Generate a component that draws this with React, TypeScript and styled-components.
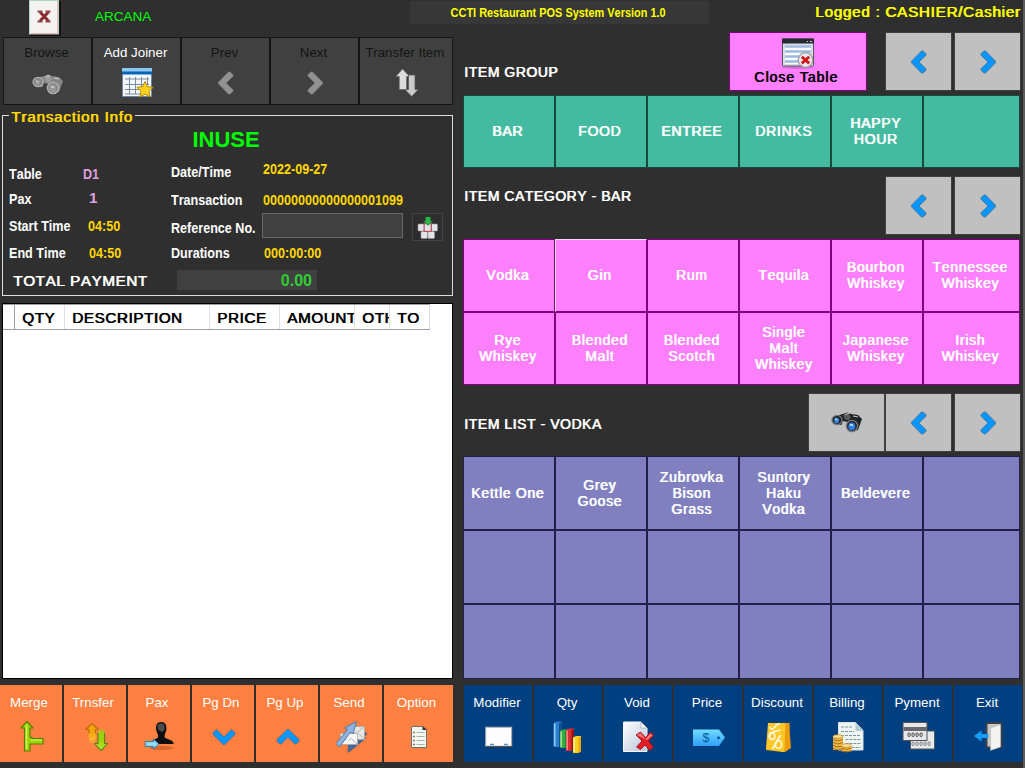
import React from "react";
import styled, { createGlobalStyle, css } from "styled-components";

const Global = createGlobalStyle`
  * { box-sizing: border-box; }
  body { margin: 0; background: #2f2f2f; font-family: "Liberation Sans", Arial, sans-serif; overflow: hidden; }
  body, button { font-kerning: none; }
  svg { display: block; flex: none; overflow: visible; }
`;

/* regular face doubled by one pixel, the way system bitmap bold is made */
const wideBold = css`
  font-weight: 400;
  letter-spacing: 0.6px;
  text-shadow: 0.8px 0 0 currentColor;
`;

const Page = styled.div`
  width: 1025px;
  height: 768px;
  background: #2f2f2f;
  border-right: 2px solid #5c5c5c;
  display: flex;
  flex-direction: column;
`;

const Header = styled.header`
  height: 32px;
  display: flex;
  align-items: flex-start;
  padding-left: 29px;
  flex: none;
`;

const Terminal = styled.div`
  width: 315px;
  margin-left: 34px;
  padding-top: 8px;
  font-size: 13.5px;
  line-height: 18px;
  color: #00ff00;
`;

const TitleBar = styled.div`
  width: 299px;
  height: 23px;
  margin-top: 1px;
  background: #373737;
  color: #ffff00;
  font-size: 13.33px;
  font-weight: 700;
  line-height: 24px;
  display: flex;
  justify-content: center;
  padding-right: 3px;
`;

const Narrow = styled.span<{ $from?: string }>`
  display: inline-block;
  white-space: nowrap;
  transform: scaleX(0.82);
  transform-origin: ${(p) => p.$from ?? "left"} center;
`;

const User = styled.div`
  ${wideBold}
  letter-spacing: 0.75px;
  margin-left: 106px;
  padding-top: 3px;
  font-size: 15.2px;
  line-height: 18px;
  white-space: nowrap;
  color: #ffff00;
`;

const Columns = styled.main`
  display: flex;
  flex: 1;
`;

const LeftPane = styled.section`
  width: 453px;
  padding-top: 5px;
`;

const RightPane = styled.section`
  width: 560px;
  margin-left: 10px;
`;

const Toolbar = styled.div`
  display: grid;
  grid-template-columns: repeat(4, 89px) 94px;
  height: 68px;
  margin-left: 3px;
`;

const Caption = styled.span<{ $pull: number }>`
  padding-right: ${(p) => p.$pull}px;
  white-space: nowrap;
`;

const ToolButton = styled.button<{ $off?: boolean }>`
  border: 1px solid #151515;
  background: #404040;
  padding: 6px 0 0;
  color: ${(p) => (p.$off ? "#141414" : "#ffffff")};
  font: 13.33px/18px "Liberation Sans", Arial, sans-serif;
  display: flex;
  flex-direction: column;
  align-items: center;
  gap: 5px;
`;

const Info = styled.section`
  position: relative;
  height: 181px;
  margin: 10px 0 0 2px;
  border: 1px solid #dcdcdc;
`;

const Legend = styled.h2`
  ${wideBold}
  letter-spacing: 0.8px;
  position: absolute;
  left: 6px;
  top: -8px;
  margin: 0;
  padding: 0 2px 0 2px;
  background: #2f2f2f;
  color: #ffd700;
  font-size: 15.2px;
  line-height: 18px;
  white-space: nowrap;
`;

const Status = styled.div`
  padding-top: 11px;
  height: 43px;
  text-align: center;
  padding-right: 3px;
  font-size: 22px;
  font-weight: 700;
  line-height: 26px;
  color: #00ff00;
`;

const Fields = styled.div`
  display: flex;
  height: 111px;
`;

const FieldList = styled.div<{ $width: number; $rows: string; $label: number }>`
  width: ${(p) => p.$width}px;
  display: grid;
  grid-template-columns: ${(p) => p.$label}px 1fr;
  grid-template-rows: ${(p) => p.$rows};
  align-content: start;
`;

const Cell = styled.div<{ $color?: string; $top?: number; $left?: number }>`
  color: ${(p) => p.$color ?? "#ffffff"};
  font-size: 15.35px;
  font-weight: 700;
  line-height: 18px;
  white-space: nowrap;
  min-width: 0;
  padding-top: ${(p) => p.$top ?? 0}px;
  padding-left: ${(p) => p.$left ?? 0}px;
`;

const ReferenceRow = styled.div`
  display: flex;
  gap: 9px;
  margin-top: -2px;
`;

const ReferenceInput = styled.input`
  width: 141px;
  height: 25px;
  padding: 0 4px;
  border: 1px solid #696969;
  background: #404040;
  color: #fff;
`;

const KeypadButton = styled.button`
  width: 31px;
  height: 28px;
  padding: 0;
  border: 1px solid #434343;
  background: #2d2d2d;
  display: flex;
  align-items: center;
  justify-content: center;
`;

const TotalRow = styled.div`
  display: flex;
  padding-left: 10px;
`;

const TotalLabel = styled.div`
  ${wideBold}
  width: 164px;
  padding-top: 2px;
  font-size: 15.2px;
  line-height: 18px;
  color: #fff;
`;

const TotalValue = styled.div`
  width: 140px;
  height: 20px;
  padding-right: 5px;
  background: #404040;
  color: #32cd32;
  text-align: right;
  font-size: 16px;
  font-weight: 700;
  line-height: 21px;
`;

const OrderTable = styled.div`
  height: 376px;
  margin: 7px 0 0 2px;
  border: 1px solid #000;
  background: #fff;
`;

const OrderHead = styled.div`
  display: grid;
  grid-template-columns: 12px 50px 145px 70px 75px 35px 40px;
  width: 427px;
  height: 26px;
  border-top: 1px solid #a0a0a0;
  border-bottom: 1px solid #a0a0a0;
`;

const HeadCell = styled.div<{ $dark?: boolean }>`
  ${wideBold}
  overflow: hidden;
  border-right: 1px solid ${(p) => (p.$dark ? "#a0a0a0" : "#e0e0e0")};
  padding-left: 7px;
  color: #000;
  font-size: 15.2px;
  line-height: 25px;
  white-space: nowrap;
`;

const ActionBar = styled.div<{ $columns: string; $left?: number }>`
  display: grid;
  grid-template-columns: ${(p) => p.$columns};
  gap: 2px;
  height: 77px;
  margin-top: 6px;
  margin-left: ${(p) => p.$left ?? 0}px;
`;

const ActionButton = styled.button<{ $tone: string }>`
  border: 0;
  padding: 9px 0 0;
  background: ${(p) => p.$tone};
  color: #ffffff;
  font: 13.33px/18px "Liberation Sans", Arial, sans-serif;
  display: flex;
  flex-direction: column;
  align-items: center;
  gap: 9px;
  overflow: hidden;
`;

const SectionBar = styled.div<{ $top: number }>`
  display: flex;
  width: 558px;
  height: 59px;
  margin-top: ${(p) => p.$top}px;
`;

const SectionTitle = styled.h3<{ $drop: number }>`
  ${wideBold}
  flex: 1;
  margin: 0;
  padding: ${(p) => p.$drop}px 0 0 1px;
  color: #fff;
  font-size: 13.9px;
  line-height: 18px;
  white-space: nowrap;
`;

const CloseButton = styled.button`
  width: 138px;
  margin-right: 18px;
  padding: 4px 4px 0 0;
  border: 1px solid #800080;
  background: #ff80ff;
  display: flex;
  flex-direction: column;
  align-items: center;
  color: #000;
  font: 14px/16px "Liberation Sans", Arial, sans-serif;
  letter-spacing: 1px;
  text-shadow: 0.8px 0 0 currentColor;
`;

const NavButton = styled.button<{ $width?: number; $gap?: number }>`
  width: ${(p) => p.$width ?? 67}px;
  margin-left: ${(p) => p.$gap ?? 0}px;
  padding: 0;
  border: 1px solid #404040;
  background: #c0c0c0;
  display: flex;
  align-items: center;
  justify-content: center;
`;

const TileGrid = styled.div<{ $rows: string; $top: number }>`
  display: grid;
  grid-template-columns: repeat(5, 92px) 97px;
  grid-template-rows: ${(p) => p.$rows};
  margin-top: ${(p) => p.$top}px;
`;

const Tile = styled.button<{ $fill: string; $edge: string; $lit?: boolean; $lift?: number }>`
  ${wideBold}
  border: 1px solid ${(p) => p.$edge};
  ${(p) => p.$lit && "border-top-color: #f4d8f4; border-left-color: #f4d8f4;"}
  background: ${(p) => p.$fill};
  color: #fff;
  padding: 0 3px ${(p) => p.$lift ?? 0}px 0;
  font-family: "Liberation Sans", Arial, sans-serif;
  font-size: 13.9px;
  letter-spacing: 0.75px;
  line-height: 16px;
  white-space: pre-line;
  text-align: center;
`;

const Chevron = ({ dir, color = "#0a96ff", edge = "#456f8e" }: { dir: "l" | "r" | "u" | "d"; color?: string; edge?: string }) => {
  const turn = { l: 0, u: 90, r: 180, d: 270 }[dir];
  return (
    <svg width="24" height="24" viewBox="0 0 24 24">
      <g transform={`rotate(${turn} 12 12)`} fill={color} stroke={edge} strokeWidth="0.8" strokeLinejoin="round">
        <path d="M15.800 0.900 19.100 3.800 19 5.200 12 12 19 18.800 19.100 20.200 15.800 23.100 14.400 22.900 4.500 12.800V11.200L14.400 1.100z" />
      </g>
    </svg>
  );
};

const Binoculars = ({ gray }: { gray?: boolean }) => {
  const body = gray ? "#858585" : "#202226";
  const rim = gray ? "#b0b0b0" : "#77797b";
  const lens = gray ? "#969696" : "#2f7edb";
  return (
    <svg width="32" height="22" viewBox="0 0 32 22">
      <path d="M4 4 12 2l4-1.500L20 2l7 1 4 4-4 11-6 1-5-7-8 1z" fill={body} />
      <path d="M12 3l5-1.500 3 3-2 4-4-1z" fill={gray ? "#9c9c9c" : "#55585c"} />
      <path d="M14 2.500l4-1M22 4l5 1" stroke={gray ? "#d0d0d0" : "#c6c6c6"} strokeWidth="1.200" />
      <path d="M11.500 9l5 1-1.500 4-4-1z" fill={gray ? "#404040" : "#c0c0c0"} />
      <ellipse cx="6" cy="8" rx="5" ry="4.600" fill={body} stroke={rim} strokeWidth="1.200" />
      <ellipse cx="5.600" cy="8.400" rx="2.500" ry="3" fill={lens} />
      <path d="M4.300 6.800l2 1.500" stroke={gray ? "#d0d0d0" : "#d8e8f4"} strokeWidth="1.200" />
      <ellipse cx="21" cy="14" rx="5.600" ry="5.600" fill={body} stroke={rim} strokeWidth="1.400" />
      <ellipse cx="20.800" cy="14.400" rx="3.500" ry="3.800" fill={lens} />
      <path d="M19 12.500l3 1" stroke={gray ? "#d0d0d0" : "#d8e8f4"} strokeWidth="1.600" />
    </svg>
  );
};

const BrokenImage = () => (
  <svg width="32" height="36" viewBox="0 0 32 36">
    <rect x="1" y="1" width="31" height="35" fill="#1a1212" />
    <rect x="0.5" y="0.5" width="29" height="33.5" fill="#f5f3f1" stroke="#b0d4c9" />
    <path d="M28.5 1v32.5H2" fill="none" stroke="#e8b7b7" />
    <path d="M11 12 19.500 21M19.500 12 11 21" stroke="#8c2a2e" strokeWidth="3" />
    <path d="M8.500 11.500h5M16.500 11.500h5M8.500 21.500h5M16.500 21.500h5" stroke="#8f4747" strokeWidth="2" />
  </svg>
);

const CalendarStar = () => (
  <svg width="32" height="32" viewBox="0 0 32 32">
    <rect x="1.5" y="2.5" width="29" height="27" fill="#f4f7fb" stroke="#6a86a6" />
    <rect x="1" y="1" width="30" height="4" fill="#8cc8f0" />
    <rect x="1" y="4.500" width="30" height="3" fill="#0a63b8" />
    <path d="M4 12h24M4 17.500h24M4 22.500h24M4 27h18M8.500 10v17M14.500 10v17M20.500 10v17M26.500 10v8" stroke="#7b8c9f" strokeWidth="1" fill="none" />
    <path d="m24 14.500 2.500 5.200 5.700.6-4.200 4 1.100 5.700-5.100-2.800-5.100 2.800 1.100-5.700-4.200-4 5.700-.6z" fill="#ffd21c" stroke="#b8860b" strokeWidth="1" />
  </svg>
);

const TransferGray = () => (
  <svg width="24" height="30" viewBox="-1.500 0 24 30">
    <path d="M7 1 14 8.500h-3V21.500H3.800V8.500H.5z" fill="#dcdcdc" stroke="#6a6a6a" strokeWidth=".7" />
    <path d="M13 7h6.500v14.500h3.200L16.200 28.500 9.500 21.500H13z" fill="#cacaca" stroke="#5a5a5a" strokeWidth=".8" />
  </svg>
);

const Keypad = () => (
  <svg width="22" height="23" viewBox="0 0 22 23">
    {[[1, 8], [7.500, 8], [14, 8], [4, 15.500], [11, 15.500]].map(([x, y], i) => (
      <rect key={i} x={x} y={y} width="6.500" height="7" rx="1" fill="#e4e4e6" stroke="#9b9b9d" strokeWidth=".6" />
    ))}
    <path d="M7 7.500h7.500v8H7z" fill="none" stroke="#c8515e" />
    <path d="M8.500 1h5v4h2L11 9.500 6.500 5h2z" fill="#2fb54a" stroke="#167a2b" strokeWidth=".6" />
  </svg>
);

const CloseTableIcon = () => (
  <svg width="34" height="32" viewBox="-2 -1 34 32">
    <ellipse cx="17" cy="29.500" rx="16" ry="1.500" fill="#b25cb2" opacity=".55" />
    <rect x="1.500" y="1" width="31" height="27" rx="1" fill="#d9dde1" stroke="#515a62" />
    <path d="M1 .5h32V5.500H1z" fill="#252b31" />
    <path d="M26 3.500h1M29 3.500h2" stroke="#ddd" />
    <path d="M4 7h26v19H4z" fill="#f9fbfd" />
    <path d="M4 8.500h26M4 13.500h26M4 18.500h15M4 23.500h13" stroke="#9dbbe0" strokeWidth="2.600" />
    <circle cx="24.500" cy="22" r="7.300" fill="#e8e8ea" stroke="#9a9a9c" strokeWidth="1.200" />
    <path d="m20.800 18.800 7.400 6.600M28.200 18.800l-7.400 6.600" stroke="#d0151b" strokeWidth="2.800" />
  </svg>
);

const MergeIcon = () => (
  <svg width="32" height="32" viewBox="-1.500 1 32 32">
    <path d="M10.500 1.500 16.500 8h-3v8.500c1.500 1.800 2.500 2 4 2h9v5.500H13.500v7H8V8H4.500z" fill="#9bd40c" stroke="#587e05" strokeWidth="1.200" strokeLinejoin="round" />
    <path d="M10 4.500V29" stroke="#d5f564" strokeWidth="1.400" />
    <path d="M14 20h11.500" stroke="#d5f564" />
  </svg>
);

const TrnsferIcon = () => (
  <svg width="32" height="32" viewBox="-3 0 32 32">
    <defs>
      <linearGradient id="amber" x1="0" y1="0" x2="0" y2="1"><stop offset="0" stopColor="#f0a010" /><stop offset=".6" stopColor="#ffb62a" /><stop offset="1" stopColor="#ffab38" stopOpacity=".2" /></linearGradient>
      <linearGradient id="lime" x1="0" y1="1" x2="0" y2="0"><stop offset="0" stopColor="#b8e43c" /><stop offset=".7" stopColor="#96d20a" /><stop offset="1" stopColor="#9ed01a" stopOpacity=".3" /></linearGradient>
    </defs>
    <path d="M7 9v14h6.500V9z" fill="url(#amber)" />
    <path d="m10 2.500 6.500 6H13.500v5H7v-5H3.500z" fill="#f2a40d" stroke="#bd6b05" strokeWidth="1.100" strokeLinejoin="round" />
    <path d="M6.500 12.500H14v3H6.500z" fill="#f8ab1c" />
    <path d="M16 8v15h6.500V8z" fill="url(#lime)" />
    <path d="M16 12v10.500h-3.500l6.700 7.200 6.300-7.200h-3V12" fill="url(#lime)" stroke="#538514" strokeWidth="1.100" strokeLinejoin="round" />
  </svg>
);

const PaxIcon = () => (
  <svg width="32" height="32" viewBox="-1.500 .5 32 32">
    <ellipse cx="17" cy="27.500" rx="12" ry="2" fill="#a54a1d" opacity=".45" />
    <path d="M16.500 1.500c4.200 0 5.700 3 5.400 7-.2 3-1.200 4-1.700 5.500v3c3 2 9 2.500 9 6.500H6c0-3.500 5-4.500 7.500-6.500v-3c-.8-1.500-1.700-2.500-1.900-5.500-.3-4 1-7 4.900-7z" fill="#0d0e10" />
    <path d="M13 5c1.500-3 6.500-2.500 7 .5.500 4-.8 5-2 6-3-.5-5.200-2.500-5-6.500z" fill="#4c4c4e" />
    <path d="M.8 21h8V18.500l5.500 5-5.500 5V26h-8z" fill="#8edbf8" stroke="#2f81aa" strokeWidth="1" />
  </svg>
);

const SendIcon = () => (
  <svg width="32" height="32" viewBox="-.5 .5 32 32">
    <path d="m12.500 32 .5-10 4 1 9-9 1-3 4.500 2-2.500 3 1 2-11 9z" fill="#44699d" stroke="#37557d" strokeWidth=".6" />
    <path d="M12 6h17v13H12z" fill="#e7e5e3" stroke="#a7a7a5" strokeWidth=".8" />
    <path d="m12 6 8.500 7L29 6M29 19l-6-6" fill="none" stroke="#b4b4b4" />
    <path d="M5 13h17v11H5z" fill="#f7f6f4" stroke="#a7a7a5" strokeWidth=".8" />
    <path d="m5 24 6-6M22 24l-6-6-3 2" fill="none" stroke="#b4b4b4" />
    <path d="M.5 23 12 9 9 7.500 21 1l-3.500 12.500-2.500-2L4 26.500z" fill="#8fb3dc" stroke="#5079aa" strokeWidth="1" />
  </svg>
);

const OptionIcon = () => (
  <svg width="20" height="24" viewBox="0 0 20 24">
    <path d="M2.500 1.500H14l3.500 3.500v17.500h-15z" fill="#f3f6ef" stroke="#70706e" />
    <path d="M13.500 1v4H18z" fill="#333" />
    <path d="M7.500 7.500h8M7.500 11.500h8M7.500 15.500h8M7.500 19.500h8" stroke="#a9b3a7" strokeWidth="1.200" />
    <path d="M4.200 7.500h1.600M4.200 11.500h1.600M4.200 15.500h1.600M4.200 19.500h1.600" stroke="#5c635c" strokeWidth="1.600" />
  </svg>
);

const ModifierIcon = () => (
  <svg width="28" height="22" viewBox="0 0 28 22">
    <rect x=".7" y="1.200" width="26" height="19" fill="#fdfdfd" stroke="#a7acb0" />
    <path d="M.7 20.700h26.600" stroke="#463a2b" strokeWidth=".9" />
    <path d="M5 18.500h4M19 18.500h4" stroke="#4a9ad8" strokeWidth="1.600" />
  </svg>
);

const Bar = ({ x, y, h, a, b, c }: { x: number; y: number; h: number; a: string; b: string; c: string }) => (
  <g>
    <path d={`M${x} ${y + 1.500} l3 -1.500 h5 v${h - 1} l-3 1.500 h-5z`} fill={a} />
    <path d={`M${x + 1.200} ${y + 2} v${h - 2.500}`} stroke={b} strokeWidth="1.600" />
    <path d={`M${x + 5.500} ${y + 2} l2.500 -1.500 v${h - 1.500} l-2.500 1.500z`} fill={c} />
  </g>
);

const QtyIcon = () => (
  <svg width="32" height="32" viewBox="1 0 32 32">
    <Bar x={2.500} y={0.500} h={25} a="#2b7fd0" b="#8fccf5" c="#11508f" />
    <Bar x={9} y={8.500} h={18} a="#35a944" b="#9ee08f" c="#197027" />
    <Bar x={15} y={7.500} h={22} a="#d52f34" b="#f58a83" c="#941318" />
    <Bar x={22} y={15} h={16.500} a="#ffcf1c" b="#fff08a" c="#eba80b" />
  </svg>
);

const VoidIcon = () => (
  <svg width="34" height="32" viewBox="0 0 34 32">
    <defs><linearGradient id="sheet" x1="0" y1="0" x2="1" y2="1"><stop offset="0" stopColor="#fff" /><stop offset="1" stopColor="#b8c2da" /></linearGradient></defs>
    <path d="M2.500 1H20l6 6v23.500h-23.500z" fill="url(#sheet)" stroke="#f5f6f8" />
    <path d="M20 1v6h6z" fill="#fff" stroke="#a0a7b5" strokeWidth=".8" />
    <path d="m15 14 4.500-3 5 5.500 5-5.500 3 3.500-5 5.500 5 6-4 3.500-4.500-5.500-4.500 4.500-4-2.500 5.500-6z" fill="#e31d23" stroke="#8f1216" strokeWidth=".8" />
    <path d="m16 14 3.500-2 5 6 5-5.500 2 2-5.500 4.500z" fill="#f2797b" />
  </svg>
);

const PriceIcon = () => (
  <svg width="34" height="20" viewBox="0 0 34 20">
    <defs><linearGradient id="tag" x1="0" y1="0" x2="0" y2="1"><stop offset="0" stopColor="#72dcff" /><stop offset="1" stopColor="#2f9ffa" /></linearGradient></defs>
    <path d="M0 2.500h26l6 8-6 8.500H0z" fill="url(#tag)" />
    <text x="9.500" y="15" fontSize="12.500" fontFamily="Liberation Sans, sans-serif" fill="#075b9e">$</text>
    <circle cx="25.500" cy="10.700" r="1.500" fill="#075b9e" />
  </svg>
);

const DiscountIcon = () => (
  <svg width="32" height="32" viewBox="-.5 0 32 32">
    <path d="M7 2h20l-.5 22-2 6-4 1-17-2z" fill="#f8b616" />
    <path d="M5.500 2H23l-1 29-18.500-3z" fill="#ffc828" />
    <path d="m23 2 3.500.5 2 24.500-6.500 4z" fill="#eb9b0b" />
    <path d="M7 6c2 4 5 1 7-2l3-1.500M7 16c1-6 4-5 11-7M18 14 10 28" fill="none" stroke="#fff7db" strokeWidth="1.700" />
    <ellipse cx="9.500" cy="15" rx="2.800" ry="3.500" fill="none" stroke="#fff7db" strokeWidth="1.600" />
    <ellipse cx="16" cy="23.500" rx="3.200" ry="3.800" fill="none" stroke="#fff7db" strokeWidth="1.600" />
  </svg>
);

const BillingIcon = () => (
  <svg width="34" height="32" viewBox="-.5 0 34 32">
    <path d="M7 1.500h17l7.500 8V29H7z" fill="#eef4f2" stroke="#d9e3e2" />
    <path d="M24 1.500V10h7.500z" fill="#b7c9d1" />
    <path d="M9.500 6h12M9.500 10.500h13M9.500 14.500h19M14 18.500h15M14 22.500h15M20 26.500h9" stroke="#7f9797" strokeWidth="1.200" strokeDasharray="3 1" />
    <path d="M1.500 15h10v14h-10zM10 24h10v6.500H10z" fill="#f2ba45" />
    {[15.500, 18.500, 21.500, 24.500, 27.500].map((y) => <path key={y} d={`M1.500 ${y}q5 3 10 0`} fill="none" stroke="#a46d15" strokeWidth="1" />)}
    <ellipse cx="6.500" cy="15.500" rx="5" ry="1.800" fill="#ffe196" stroke="#bd831b" strokeWidth=".7" />
    <path d="M10 27q5 3 10 0M10 29.500q5 3 10 0" fill="none" stroke="#a46d15" />
    <ellipse cx="15" cy="24.500" rx="5" ry="1.800" fill="#ffe196" stroke="#bd831b" strokeWidth=".7" />
  </svg>
);

const PaymentIcon = () => (
  <svg width="34" height="32" viewBox="-.5 0 34 32">
    <rect x="9" y="10" width="24" height="18" fill="#e9e9e9" stroke="#555a60" strokeWidth="1" />
    {[10.500, 14.500, 18.500, 22.500, 26.500].map((x) => <rect key={x} x={x} y="21" width="2.200" height="3.500" rx="1" fill="none" stroke="#777" strokeWidth=".9" />)}
    <rect x="1.500" y="1.500" width="24" height="18" fill="#e7e7e7" stroke="#4f5358" strokeWidth="1" />
    <rect x="2" y="6" width="23.500" height="4" fill="#66696d" />
    {[6.500, 10.500, 14.500, 18.500].map((x) => <rect key={x} x={x} y="12" width="2.200" height="3.500" rx="1" fill="none" stroke="#444" strokeWidth="1" />)}
  </svg>
);

const ExitIcon = () => (
  <svg width="32" height="32" viewBox="-2 0 32 32">
    <rect x="12.500" y="2" width="15" height="24.500" rx="1" fill="#c8c8c6" stroke="#3c4148" strokeWidth="2" />
    <path d="m16.500 7 10-3.500V26l-10 3.500z" fill="#f4f4f2" stroke="#aaa" strokeWidth=".5" />
    <path d="M0 15 7.500 9.500V13h7v4h-7v3.500z" fill="#169dff" />
  </svg>
);

const tools: { label: string; off?: boolean; icon: React.ReactNode }[] = [
  { label: "Browse", off: true, icon: <svg width="32" height="32" viewBox="0 -7 32 32"><Binoculars gray /></svg> },
  { label: "Add Joiner", icon: <CalendarStar /> },
  { label: "Prev", off: true, icon: <svg width="24" height="34" viewBox="0 -4 24 34"><Chevron dir="l" color="#919191" edge="#808080" /></svg> },
  { label: "Next", off: true, icon: <svg width="24" height="34" viewBox="0 -4 24 34"><Chevron dir="r" color="#919191" edge="#808080" /></svg> },
  { label: "Transfer Item", off: true, icon: <svg width="24" height="30" viewBox="0 -1 24 30"><TransferGray /></svg> },
];

const orderActions: [string, React.ReactNode][] = [
  ["Merge", <MergeIcon />],
  ["Trnsfer", <TrnsferIcon />],
  ["Pax", <PaxIcon />],
  ["Pg Dn", <svg width="24" height="32" viewBox="-1 -4 24 32"><Chevron dir="d" /></svg>],
  ["Pg Up", <svg width="24" height="32" viewBox="-1 -4 24 32"><Chevron dir="u" /></svg>],
  ["Send", <SendIcon />],
  ["Option", <svg width="20" height="32" viewBox="0 -4 20 32"><OptionIcon /></svg>],
];

const billActions: [string, React.ReactNode][] = [
  ["Modifier", <svg width="28" height="32" viewBox="-1 -5 28 32"><ModifierIcon /></svg>],
  ["Qty", <QtyIcon />],
  ["Void", <VoidIcon />],
  ["Price", <svg width="34" height="32" viewBox="-2 -6 34 32"><PriceIcon /></svg>],
  ["Discount", <DiscountIcon />],
  ["Billing", <BillingIcon />],
  ["Pyment", <PaymentIcon />],
  ["Exit", <ExitIcon />],
];

const groups = ["BAR", "FOOD", "ENTREE", "DRINKS", "HAPPY\nHOUR", ""];
const categories = [
  "Vodka", "Gin", "Rum", "Tequila", "Bourbon\nWhiskey", "Tennessee\nWhiskey",
  "Rye\nWhiskey", "Blended\nMalt", "Blended\nScotch", "Single\nMalt\nWhiskey", "Japanese\nWhiskey", "Irish\nWhiskey",
];
const items = [
  "Kettle One", "Grey\nGoose", "Zubrovka\nBison\nGrass", "Suntory\nHaku\nVodka", "Beldevere", "",
  ...Array(12).fill(""),
];

const Pager = () => (
  <>
    <NavButton><Chevron dir="l" /></NavButton>
    <NavButton $gap={2}><Chevron dir="r" /></NavButton>
  </>
);

const gold = "#ffd700";

export default function App() {
  return (
    <Page>
      <Global />
      <Header>
        <BrokenImage />
        <Terminal>ARCANA</Terminal>
        <TitleBar><Narrow $from="center">CCTI Restaurant POS System Version 1.0</Narrow></TitleBar>
        <User>Logged : CASHIER/Cashier</User>
      </Header>
      <Columns>
        <LeftPane>
          <Toolbar>
            {tools.map((t) => (
              <ToolButton key={t.label} $off={t.off}><Caption $pull={2}>{t.label}</Caption>{t.icon}</ToolButton>
            ))}
          </Toolbar>
          <Info>
            <Legend>Transaction Info</Legend>
            <Status>INUSE</Status>
            <Fields>
              <FieldList $width={168} $label={80} $rows="26px 27px 27px 27px">
                <Cell $top={6} $left={6}><Narrow>Table</Narrow></Cell>
                <Cell $top={6} $color="#dda0dd"><Narrow>D1</Narrow></Cell>
                <Cell $top={5} $left={6}><Narrow>Pax</Narrow></Cell>
                <Cell $top={4} $left={6} $color="#dda0dd">1</Cell>
                <Cell $top={5} $left={6}><Narrow>Start Time</Narrow></Cell>
                <Cell $top={5} $left={5} $color={gold}><Narrow>04:50</Narrow></Cell>
                <Cell $top={5} $left={6}><Narrow>End Time</Narrow></Cell>
                <Cell $top={5} $left={6} $color={gold}><Narrow>04:50</Narrow></Cell>
              </FieldList>
              <FieldList $width={281} $label={91} $rows="28px 28px 26px 28px">
                <Cell $top={4}><Narrow>Date/Time</Narrow></Cell>
                <Cell $top={1} $left={1} $color={gold}><Narrow>2022-09-27</Narrow></Cell>
                <Cell $top={4}><Narrow>Transaction</Narrow></Cell>
                <Cell $top={4} $left={1} $color={gold}><Narrow>00000000000000001099</Narrow></Cell>
                <Cell $top={4}><Narrow>Reference No.</Narrow></Cell>
                <ReferenceRow>
                  <ReferenceInput aria-label="Reference No." />
                  <KeypadButton aria-label="Keypad"><Keypad /></KeypadButton>
                </ReferenceRow>
                <Cell $top={3}><Narrow>Durations</Narrow></Cell>
                <Cell $top={3} $left={2} $color={gold}><Narrow>000:00:00</Narrow></Cell>
              </FieldList>
            </Fields>
            <TotalRow>
              <TotalLabel>TOTAL PAYMENT</TotalLabel>
              <TotalValue>0.00</TotalValue>
            </TotalRow>
          </Info>
          <OrderTable>
            <OrderHead>
              <HeadCell $dark />
              <HeadCell>QTY</HeadCell>
              <HeadCell>DESCRIPTION</HeadCell>
              <HeadCell>PRICE</HeadCell>
              <HeadCell>AMOUNT</HeadCell>
              <HeadCell>OTH</HeadCell>
              <HeadCell>TO</HeadCell>
            </OrderHead>
          </OrderTable>
          <ActionBar $columns="repeat(6, 62px) 69px">
            {orderActions.map(([label, icon]) => (
              <ActionButton key={label} $tone="#ff8040"><Caption $pull={4}>{label}</Caption>{icon}</ActionButton>
            ))}
          </ActionBar>
        </LeftPane>
        <RightPane>
          <SectionBar $top={0}>
            <SectionTitle $drop={31}>ITEM GROUP</SectionTitle>
            <CloseButton><CloseTableIcon />Close Table</CloseButton>
            <Pager />
          </SectionBar>
          <TileGrid $rows="73px" $top={4}>
            {groups.map((g, i) => <Tile key={i} $fill="#44bba0" $edge="#17493d" $lift={2}>{g}</Tile>)}
          </TileGrid>
          <SectionBar $top={8}>
            <SectionTitle $drop={11}>ITEM CATEGORY - BAR</SectionTitle>
            <Pager />
          </SectionBar>
          <TileGrid $rows="73px 73px" $top={4}>
            {categories.map((c, i) => <Tile key={i} $fill="#ff80ff" $edge="#800080" $lift={2} $lit={i === 1}>{c}</Tile>)}
          </TileGrid>
          <SectionBar $top={8}>
            <SectionTitle $drop={22}>ITEM LIST - VODKA</SectionTitle>
            <NavButton $width={77}><Binoculars /></NavButton>
            <Pager />
          </SectionBar>
          <TileGrid $rows="74px 74px 75px" $top={4}>
            {items.map((c, i) => <Tile key={i} $fill="#8080c0" $edge="#20204a">{c}</Tile>)}
          </TileGrid>
          <ActionBar $columns="repeat(8, 68px)" $left={1}>
            {billActions.map(([label, icon]) => (
              <ActionButton key={label} $tone="#004080"><Caption $pull={2}>{label}</Caption>{icon}</ActionButton>
            ))}
          </ActionBar>
        </RightPane>
      </Columns>
    </Page>
  );
}
